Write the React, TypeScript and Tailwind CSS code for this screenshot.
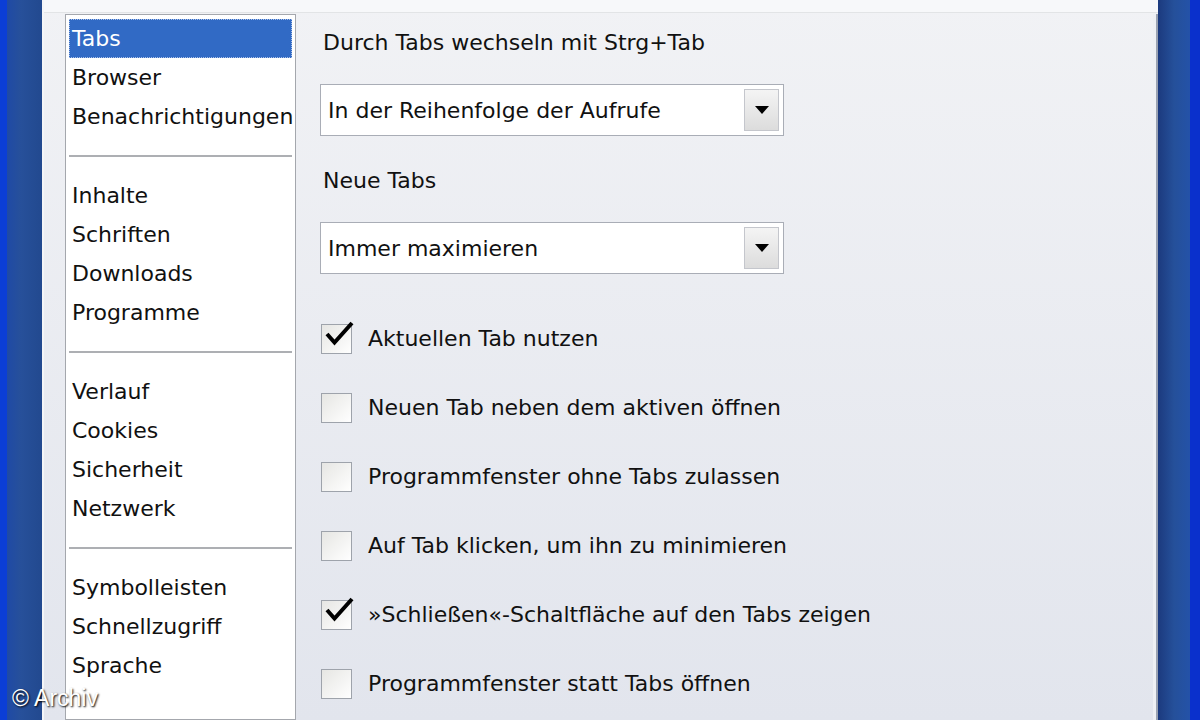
import React from "react";

const groups: string[][] = [
  ["Tabs", "Browser", "Benachrichtigungen"],
  ["Inhalte", "Schriften", "Downloads", "Programme"],
  ["Verlauf", "Cookies", "Sicherheit", "Netzwerk"],
  ["Symbolleisten", "Schnellzugriff", "Sprache"],
];

const options: { label: string; checked: boolean }[] = [
  { label: "Aktuellen Tab nutzen", checked: true },
  { label: "Neuen Tab neben dem aktiven öffnen", checked: false },
  { label: "Programmfenster ohne Tabs zulassen", checked: false },
  { label: "Auf Tab klicken, um ihn zu minimieren", checked: false },
  { label: "»Schließen«-Schaltfläche auf den Tabs zeigen", checked: true },
  { label: "Programmfenster statt Tabs öffnen", checked: false },
];

const Select: React.FC<{ value: string }> = ({ value }) => (
  <div className="flex h-[52px] w-[464px] items-center justify-between border border-[#a9adb6] bg-white pl-[7px] pr-[4px]">
    <span>{value}</span>
    <div className="flex h-[42px] w-[35px] items-center justify-center border border-[#c4c6cc] bg-[linear-gradient(to_bottom,#f4f4f4,#dcdcdc)]">
      <svg width="16" height="10" viewBox="0 0 16 10">
        <path d="M1 1h14L8 9z" fill="#000" />
      </svg>
    </div>
  </div>
);

const Checkbox: React.FC<{ checked: boolean }> = ({ checked }) => (
  <div className="relative h-[30px] w-[31px] border border-[#9ea3ab] bg-[linear-gradient(135deg,#e6e6e3,#ffffff)]">
    {checked && (
      <svg
        className="absolute left-[1px] top-[-5px]"
        width="32"
        height="28"
        viewBox="0 0 32 28"
      >
        <path
          d="M4 14l7.5 8.5L29 3"
          fill="none"
          stroke="#000"
          strokeWidth="4"
          strokeLinejoin="miter"
        />
      </svg>
    )}
  </div>
);

export default function App() {
  return (
    <div
      className="relative flex h-[720px] w-[1200px] overflow-hidden text-[22px] text-[#111]"
      style={{ fontFamily: '"DejaVu Sans", Verdana, sans-serif' }}
    >
      {/* left window frame */}
      <div className="flex w-[44px] shrink-0">
        <div className="w-[7px] bg-[#0b3ed6]" />
        <div className="w-[35px] bg-[linear-gradient(to_right,#1f4aa6,#27509a_40%,#22498f)]" />
        <div className="w-[2px] bg-[#f4f5f7]" />
      </div>

      {/* dialog */}
      <div className="flex flex-1 flex-col bg-[linear-gradient(to_bottom,#f1f2f5,#e2e5ed)]">
        <div className="h-[13px] border-b border-[#e2e4e6] bg-[#f7f8fa]" />
        <div className="flex flex-1 pt-[1px]">
          {/* category list */}
          <div className="ml-[21px] w-[231px] shrink-0 border border-[#a4a7ad] bg-white px-[3px] pt-[4px]">
            {groups.map((items, gi) => (
              <div key={gi}>
                {gi > 0 && (
                  <div className="flex h-[40px] items-center">
                    <div className="h-[2px] w-full bg-[#adafb3]" />
                  </div>
                )}
                {items.map((item) =>
                  item === "Tabs" ? (
                    <div
                      key={item}
                      className="flex h-[39px] items-center border border-dotted border-[#a9c0e8] bg-[#316ac5] pl-[2px] text-white"
                    >
                      {item}
                    </div>
                  ) : (
                    <div key={item} className="flex h-[39px] items-center pl-[3px]">
                      {item}
                    </div>
                  )
                )}
              </div>
            ))}
          </div>

          {/* tab settings */}
          <div className="ml-[24px] flex flex-1 flex-col">
            <div className="mt-[14px] flex h-[28px] items-center pl-[3px]">
              Durch Tabs wechseln mit Strg+Tab
            </div>
            <div className="mt-[28px]">
              <Select value="In der Reihenfolge der Aufrufe" />
            </div>
            <div className="mt-[30px] flex h-[28px] items-center pl-[3px]">Neue Tabs</div>
            <div className="mt-[28px]">
              <Select value="Immer maximieren" />
            </div>
            <div className="mt-[30px] flex flex-col">
              {options.map((o) => (
                <div key={o.label} className="flex h-[69px] items-center gap-[16px] pl-[1px]">
                  <Checkbox checked={o.checked} />
                  <span>{o.label}</span>
                </div>
              ))}
            </div>
          </div>

          {/* right edge */}
          <div className="flex w-[5px] shrink-0">
            <div className="w-[3px] bg-[#eef0f4]" />
            <div className="w-[2px] bg-[#9aa2b2]" />
          </div>
        </div>
      </div>

      {/* right window frame */}
      <div className="flex w-[42px] shrink-0">
        <div className="w-[32px] bg-[linear-gradient(to_right,#1c3a7e,#25509a_50%,#2452a8)]" />
        <div className="w-[10px] bg-[#0a30cc]" />
      </div>

      {/* watermark */}
      <div
        className="absolute left-[12px] top-[681px] text-[23px] text-white [text-shadow:1px_1px_2px_#000]"
        style={{ fontFamily: '"Liberation Sans", Arial, sans-serif' }}
      >
        © Archiv
      </div>
    </div>
  );
}
